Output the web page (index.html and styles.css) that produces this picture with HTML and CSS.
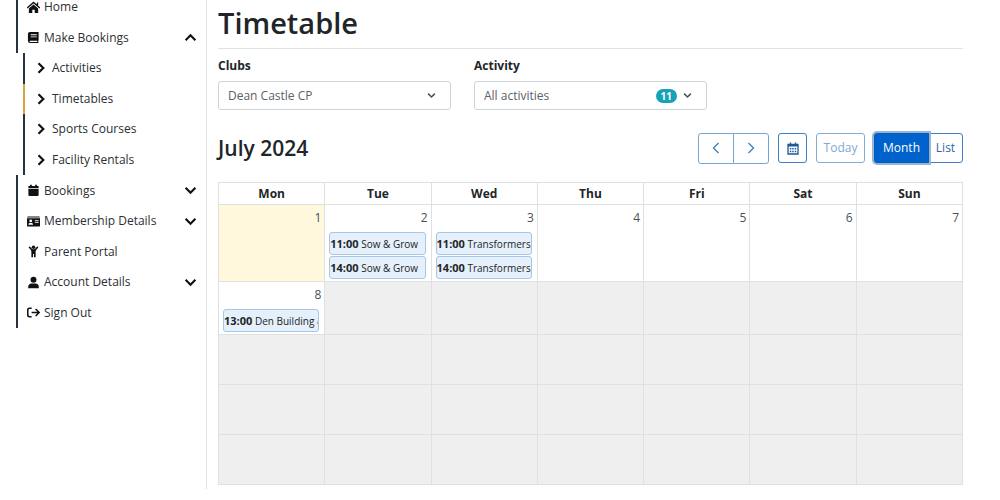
FILE: index.html
```
<!DOCTYPE html>
<html lang="en">
<head>
<meta charset="utf-8">
<title>Timetable</title>
<link rel="stylesheet" href="styles.css">
</head>
<body>
<svg class="defs" aria-hidden="true">
  <symbol id="chev" viewBox="0 0 12 12"><path d="M1.5 3.5 6 8l4.500-4.500" fill="none" stroke="currentColor" stroke-width="2"/></symbol>
  <symbol id="right" viewBox="0 0 12 12"><path d="M3.500 1.200 8.300 6l-4.800 4.800" fill="none" stroke="currentColor" stroke-width="2.200"/></symbol>
</svg>
<div class="page">
  <aside class="sidebar">
    <nav class="nav">
      <a class="item" href="#"><svg class="icon" viewBox="1 0 14 14"><path d="M8 3.800 3 8v5h3.700V9.500h2.600V13H13V8z"/><path d="M1.200 7.500 8 1.600l6.800 5.900M12.300 1.500v3" fill="none" stroke="currentColor" stroke-width="1.500"/></svg><span>Home</span></a>
      <a class="item" href="#"><svg class="icon" viewBox="1 0 14 14"><path fill-rule="evenodd" d="M4.500 1H13.500V10.200L13 10.800V12L13.500 12.200V13H4.300A2.300 2.300 0 0 1 2 10.800V3.300A2.300 2.300 0 0 1 4.500 1M5 3.600V4.600H11.500V3.600zM5 5.800V6.800H11.500V5.800zM4.500 10.500a.7.7 0 0 0 0 1.400H12V10.500z"/></svg><span>Make Bookings</span><svg class="toggle up"><use href="#chev"/></svg></a>
      <div class="submenu">
        <a class="item" href="#"><svg class="arrow"><use href="#right"/></svg><span>Activities</span></a>
        <a class="item active" href="#"><svg class="arrow"><use href="#right"/></svg><span>Timetables</span></a>
        <a class="item" href="#"><svg class="arrow"><use href="#right"/></svg><span>Sports Courses</span></a>
        <a class="item" href="#"><svg class="arrow"><use href="#right"/></svg><span>Facility Rentals</span></a>
      </div>
      <a class="item" href="#"><svg class="icon" viewBox="1 0 14 14"><path d="M4.300.8h1.900v1.400h3.600V.8h1.900v1.400H13.500V4.500H2.500V2.200H4.300zM2.500 5.300h11v6.500a1.200 1.200 0 0 1-1.200 1.200H3.700a1.200 1.200 0 0 1-1.200-1.200z"/></svg><span>Bookings</span><svg class="toggle"><use href="#chev"/></svg></a>
      <a class="item" href="#"><svg class="icon" viewBox="1 0 14 14"><path fill-rule="evenodd" d="M2.200 1.500H13.800A1.200 1.200 0 0 1 15 2.700H1A1.200 1.200 0 0 1 2.200 1.500M1 3.400H15V11.500A1 1 0 0 1 14 12.500H2A1 1 0 0 1 1 11.500zM5 4.900A1.500 1.500 0 1 0 5 7.900A1.500 1.500 0 1 0 5 4.900M2.500 10.600H7.500C7.500 9.200 6.800 8.500 5.800 8.500H4.200C3.200 8.500 2.500 9.200 2.500 10.600M9.500 5.300V6.300H13.500V5.300zM9.500 7.300V8.300H13.500V7.300z"/></svg><span>Membership Details</span><svg class="toggle"><use href="#chev"/></svg></a>
      <a class="item" href="#"><svg class="icon" viewBox="1 0 14 14"><circle cx="8" cy="2.500" r="1.900"/><path d="m3.700 2.400 2.700 3.100h3.200l2.700-3.100" fill="none" stroke="currentColor" stroke-width="1.700" stroke-linecap="round"/><path d="M5.700 5h4.600v8.200H8.500V9.700h-1v3.500H5.700z"/></svg><span>Parent Portal</span></a>
      <a class="item" href="#"><svg class="icon" viewBox="1 0 14 14"><circle cx="8" cy="4" r="3.200"/><path d="M2.300 13.200v-1.500c0-2.200 1.400-3.700 3.500-3.700h4.400c2.100 0 3.500 1.500 3.500 3.700v1.500z"/></svg><span>Account Details</span><svg class="toggle"><use href="#chev"/></svg></a>
      <a class="item" href="#"><svg class="icon" viewBox="1 0 14 14"><path d="M6 2.500H3.500A1.700 1.700 0 0 0 1.800 4.200v5.600a1.700 1.700 0 0 0 1.700 1.700H6M6 7h7.500M10.300 3.300 14 7l-3.700 3.700" fill="none" stroke="currentColor" stroke-width="1.700"/></svg><span>Sign Out</span></a>
    </nav>
  </aside>
  <main class="main">
    <h1 class="title">Timetable</h1>
    <form class="filters">
      <div class="field">
        <label for="clubs">Clubs</label>
        <div class="control">
          <select id="clubs"><option>Dean Castle CP</option></select>
          <svg class="caret"><use href="#chev"/></svg>
        </div>
      </div>
      <div class="field">
        <label for="activity">Activity</label>
        <div class="control">
          <select id="activity"><option>All activities</option></select>
          <span class="badge">11</span>
          <svg class="caret"><use href="#chev"/></svg>
        </div>
      </div>
    </form>
    <div class="toolbar">
      <h2 class="month">July 2024</h2>
      <div class="group pager">
        <button class="btn" type="button" aria-label="Previous"><svg class="nav-icon" viewBox="0 0 12 12"><path d="M8.500 1 3.500 6l5 5"/></svg></button>
        <button class="btn" type="button" aria-label="Next"><svg class="nav-icon" viewBox="0 0 12 12"><path d="m3.500 1 5 5-5 5"/></svg></button>
      </div>
      <button class="btn pick" type="button" aria-label="Pick a date"><svg class="cal-icon" viewBox="0 0 12 13"><path d="M1 2.500h10v9.500H1zM3.500.5v2M8.500.5v2" fill="none" stroke="currentColor" stroke-width="1.300"/><path d="M1 2h10v2.600H1zM2.800 6h1.500v1.500H2.800zM5.200 6h1.500v1.500H5.200zM7.700 6h1.500v1.500H7.700zM2.800 8.700h1.500v1.500H2.800zM5.200 8.700h1.500v1.500H5.200zM7.700 8.700h1.500v1.500H7.700z"/></svg></button>
      <button class="btn today" type="button" disabled>Today</button>
      <div class="group views">
        <button class="btn selected" type="button">Month</button>
        <button class="btn" type="button">List</button>
      </div>
    </div>
    <table class="calendar">
      <thead><tr><th>Mon</th><th>Tue</th><th>Wed</th><th>Thu</th><th>Fri</th><th>Sat</th><th>Sun</th></tr></thead>
      <tbody>
        <tr class="first">
          <td class="current"><div class="day">1</div></td>
          <td><div class="day">2</div><a class="event" href="#"><b>11:00</b> Sow &amp; Grow</a><a class="event" href="#"><b>14:00</b> Sow &amp; Grow</a></td>
          <td><div class="day">3</div><a class="event" href="#"><b>11:00</b> Transformers</a><a class="event" href="#"><b>14:00</b> Transformers</a></td>
          <td><div class="day">4</div></td><td><div class="day">5</div></td><td><div class="day">6</div></td><td><div class="day">7</div></td>
        </tr>
        <tr class="second">
          <td><div class="day">8</div><a class="event" href="#"><b>13:00</b> Den Building &amp;</a></td>
          <td class="off"></td><td class="off"></td><td class="off"></td><td class="off"></td><td class="off"></td><td class="off"></td>
        </tr>
        <tr><td class="off"></td><td class="off"></td><td class="off"></td><td class="off"></td><td class="off"></td><td class="off"></td><td class="off"></td></tr>
        <tr><td class="off"></td><td class="off"></td><td class="off"></td><td class="off"></td><td class="off"></td><td class="off"></td><td class="off"></td></tr>
        <tr><td class="off"></td><td class="off"></td><td class="off"></td><td class="off"></td><td class="off"></td><td class="off"></td><td class="off"></td></tr>
      </tbody>
    </table>
  </main>
</div>
</body>
</html>
```
FILE: styles.css
```
* { box-sizing: border-box; }
body {
  margin: 0;
  background: #fff;
  color: #212529;
  font-family: "Open Sans", "Noto Sans", sans-serif;
  font-size: 12px;
  line-height: 18px;
}
a { color: inherit; text-decoration: none; }
.defs { position: absolute; width: 0; height: 0; }
.page { display: flex; overflow: hidden; margin-bottom: 10px; }

.sidebar { flex: 0 0 207px; padding: 0 9px 0 16px; border-right: 1px solid #dee2e6; }
.nav { display: flex; flex-direction: column; height: 336px; margin-top: -8px; line-height: 14px; }
.item {
  flex: 1;
  display: flex;
  align-items: center;
  gap: 4px;
  padding-left: 9px;
  border-left: 2px solid #26323f;
  color: #2b2f33;
}
.submenu { flex: 4; display: flex; flex-direction: column; margin-left: 7px; }
.submenu .item { padding-left: 10px; gap: 5px; }
.submenu .active { border-color: #d9a441; }
.icon { width: 13px; height: 13px; flex: none; fill: #111; color: #111; }
.arrow { width: 12px; height: 12px; color: #111; }
.toggle { width: 13px; height: 13px; margin-left: auto; color: #111; }
.up { transform: rotate(180deg); }

.main { flex: 1; min-width: 0; padding: 0 37px 4px 11px; }
.title {
  margin: 0 0 8px;
  padding: 1px 0 4px;
  border-bottom: 1px solid #dee2e6;
  font-size: 29px;
  line-height: 43px;
  font-weight: 600;
}
.filters { display: grid; grid-template-columns: repeat(2, 233px); gap: 23px; }
.field label { display: block; margin-bottom: 6px; font-weight: 700; }
.control { position: relative; }
.control select {
  display: block;
  width: 100%;
  height: 29px;
  padding: 0 9px;
  appearance: none;
  border: 1px solid #ced4da;
  border-radius: 3px;
  background: #fff;
  color: #5a6268;
  font: inherit;
}
.caret { position: absolute; top: 10px; right: 15px; width: 9px; height: 9px; color: #495057; pointer-events: none; }
.badge {
  position: absolute;
  top: 8px;
  right: 30px;
  padding: 0 5px;
  border-radius: 7px;
  background: #17a2b8;
  color: #fff;
  font-size: 10px;
  line-height: 14px;
  font-weight: 700;
}

.toolbar { display: flex; align-items: center; gap: 9px; margin: 22px 0 18px; }
.month { flex: 1; margin: 0; font-size: 21px; line-height: 32px; font-weight: 600; }
.group { display: flex; }
.btn {
  display: flex;
  align-items: center;
  justify-content: center;
  height: 30px;
  padding: 0 7px;
  border: 1px solid #3d80c4;
  border-radius: 3px;
  background: #fff;
  color: #2d66a3;
  font: inherit;
}
.group .btn + .btn { margin-left: -1px; border-radius: 0 3px 3px 0; }
.group .btn:first-child { border-radius: 3px 0 0 3px; }
.pager .btn { width: 36px; height: 31px; border-color: #78a5d1; }
.nav-icon { width: 12px; height: 12px; fill: none; stroke: #3d7cbc; stroke-width: 1.3; }
.pick { width: 29px; }
.cal-icon { width: 12px; height: 13px; flex: none; fill: #1d5799; color: #1d5799; }
.today { width: 49px; border-color: #80add8; color: #80a9d0; }
.views .selected { width: 55px; background: #0062cc; border-color: #005cbf; color: #fff; box-shadow: 0 0 0 2px #9bb4d2; z-index: 1; }
.views .btn:last-child { width: 35px; }

.calendar { width: 100%; border-collapse: collapse; table-layout: fixed; }
.calendar th, .calendar td { padding: 0; border: 1px solid #dee0e2; }
.calendar th { height: 22px; font-weight: 700; }
.calendar td { height: 50px; vertical-align: top; }
.calendar .first td { height: 77px; }
.calendar .second td { height: 53px; }
.calendar .current { background: #fff8dc; }
.calendar .off { background: #efefef; }
.day { padding: 4px 3px 5px; text-align: right; color: #495057; }
.event {
  display: block;
  height: 23px;
  margin: 0 5px 1px 4px;
  border: 1px solid #a6c8e8;
  border-radius: 3px;
  background: #e5f0fa;
  font-size: 10px;
  line-height: 22px;
  white-space: nowrap;
  overflow: hidden;
}
.event b { font-size: 11px; }
```
